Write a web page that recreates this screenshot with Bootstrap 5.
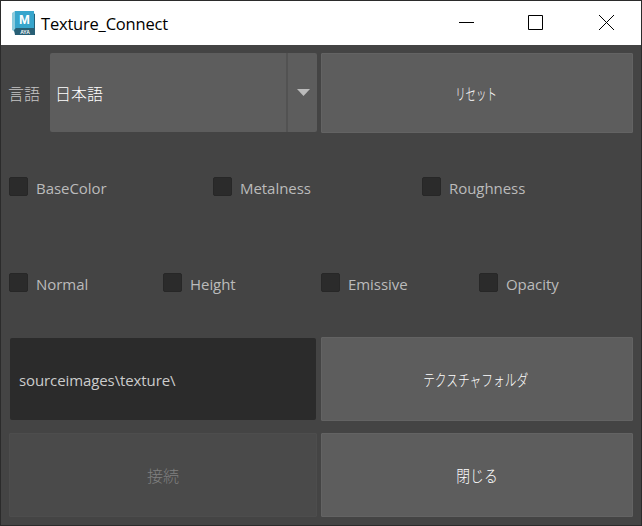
<!DOCTYPE html>
<html lang="ja">
<head>
<meta charset="utf-8">
<meta name="viewport" content="width=device-width, initial-scale=1">
<title>Texture_Connect</title>
<link href="https://cdn.jsdelivr.net/npm/bootstrap@5.3.0/dist/css/bootstrap.min.css" rel="stylesheet">
<style>
body{background:#2b2b2b;font-family:"Open Sans","Noto Sans CJK JP",sans-serif;font-size:15px;line-height:20px;color:#bbb}
.win{width:642px;height:526px;border:1px solid #2b2b2b;background:#444}
.titlebar{height:44px;padding-left:11px;color:#000;font-size:16.5px}
.title-text{letter-spacing:-.2px;margin-left:5px;padding-top:1px}
.ctl{width:70px;height:44px}
.content{padding:8px}
.jp{font-family:"Noto Sans CJK JP",sans-serif;font-size:16px;font-weight:300;line-height:20px}
.lang{width:41px;color:#c4c4c4}
.lang span{margin-left:-1px}
.combo{width:267px;height:79px;background:#5d5d5d;border-radius:2px;color:#fff}
.combo-text{padding-left:5px}
.arrow{width:31px;padding-left:1px;border-left:2px solid #525252}
.tool{height:84px;background:#5d5d5d;border:1px solid #636363;border-radius:1px;color:#fff;padding:0;width:312px}
.tool.short{height:80px}
.tool:disabled{background:#4a4a4a;border-color:#4d4d4d;color:#808080;width:308px;opacity:1}
.kana{display:inline-block}
.k1{transform:translateX(-1px) scaleX(.65)}
.k2{transform:translateX(-1px) scaleX(.733)}
.k3{transform:scaleX(.86)}
.checks{height:20px}
.checks-top{margin-top:44px}
.checks-bottom{margin-top:76px}
.path-row{margin-top:44px}
.action-row{margin-top:12px}
.checks .form-check{min-height:0;margin:0;padding:0}
.checks .form-check-input{float:none;margin:0;width:19px;height:19px;background:#2b2b2b;border:1px solid #272727;border-radius:2px}
.checks label{margin-left:8px;padding-top:1px;letter-spacing:-.05px}
.c3{width:204px}.c3b{width:209px}.c4a{width:154px}.c4{width:158px}
.path-field{width:306px;height:82px;margin:0 1px;background:#2b2b2b;border:0;border-radius:2px;color:#ccc;padding:1px 9px 0;font-size:15px;letter-spacing:-.1px}
</style>
</head>
<body>
<main class="win d-flex flex-column overflow-hidden">
  <header class="titlebar bg-white d-flex align-items-center">
    <svg width="24" height="26" viewBox="0 0 24 26" aria-hidden="true">
      <path d="M0 3L3 1v21l-3-2z" fill="#8ccbdd"/>
      <path d="M21 3l2 1v20l-2 1z" fill="#246078"/>
      <rect x="3" y="1" width="19" height="18" fill="#37a5cc"/>
      <path d="M2 20l2-2h19v7H3z" fill="#285f75"/>
      <text x="12.500" y="14" text-anchor="middle" font-family="Liberation Sans" font-size="13" font-weight="700" fill="#fff">M</text>
      <text x="13" y="24" text-anchor="middle" font-family="Liberation Sans" font-size="5" font-weight="700" fill="#fff">AYA</text>
    </svg>
    <span class="title-text">Texture_Connect</span>
    <div class="ms-auto d-flex">
      <svg class="ctl" viewBox="0 0 70 44"><path d="M28 21.500h15" stroke="#000"/></svg>
      <svg class="ctl" viewBox="0 0 70 44"><path d="M27.500 14.500h14v14h-14z" fill="none" stroke="#000"/></svg>
      <svg class="ctl" viewBox="0 0 70 44"><path d="M28 14l15 15M43 14l-15 15" stroke="#000"/></svg>
    </div>
  </header>
  <section class="content flex-grow-1">
    <div class="d-flex">
      <div class="lang jp d-flex align-items-center"><span>言語</span></div>
      <div class="combo d-flex">
        <div class="combo-text jp flex-grow-1 d-flex align-items-center">日本語</div>
        <div class="arrow d-flex align-items-center justify-content-center"><svg width="13" height="7" viewBox="0 0 13 7"><path d="M0 0h13L6.500 7z" fill="#bbb"/></svg></div>
      </div>
      <button class="btn tool short jp ms-1"><span class="kana k1">リセット</span></button>
    </div>
    <div class="checks checks-top d-flex">
      <div class="form-check d-flex c3"><input class="form-check-input" type="checkbox" id="a"><label for="a">BaseColor</label></div>
      <div class="form-check d-flex c3b"><input class="form-check-input" type="checkbox" id="b"><label for="b">Metalness</label></div>
      <div class="form-check d-flex"><input class="form-check-input" type="checkbox" id="c"><label for="c">Roughness</label></div>
    </div>
    <div class="checks checks-bottom d-flex">
      <div class="form-check d-flex c4a"><input class="form-check-input" type="checkbox" id="d"><label for="d">Normal</label></div>
      <div class="form-check d-flex c4"><input class="form-check-input" type="checkbox" id="e"><label for="e">Height</label></div>
      <div class="form-check d-flex c4"><input class="form-check-input" type="checkbox" id="f"><label for="f">Emissive</label></div>
      <div class="form-check d-flex"><input class="form-check-input" type="checkbox" id="g"><label for="g">Opacity</label></div>
    </div>
    <div class="path-row d-flex align-items-center">
      <input class="path-field" type="text" value="sourceimages\texture\">
      <button class="btn tool jp ms-1"><span class="kana k2">テクスチャフォルダ</span></button>
    </div>
    <div class="action-row d-flex">
      <button class="btn tool jp" disabled>接続</button>
      <button class="btn tool jp ms-1"><span class="kana k3">閉じる</span></button>
    </div>
  </section>
</main>
<script src="https://cdn.jsdelivr.net/npm/bootstrap@5.3.0/dist/js/bootstrap.bundle.min.js"></script>
</body>
</html>
